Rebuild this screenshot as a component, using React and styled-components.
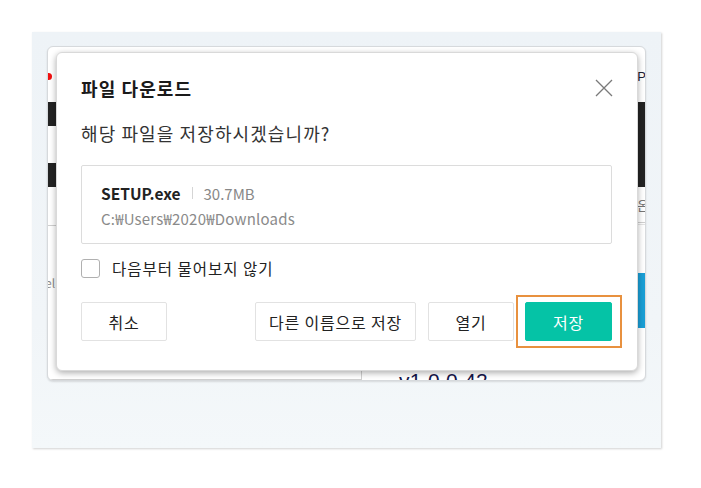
import React from "react";
import styled, { createGlobalStyle } from "styled-components";

const Global = createGlobalStyle`
  html, body { margin: 0; padding: 0; background: #ffffff; }
  body { font-family: "Noto Sans CJK KR", "Noto Sans", sans-serif; }
  * { box-sizing: border-box; }
`;

const Page = styled.div`
  padding: 32px 0 0 32px;
  width: 701px;
  height: 488px;
`;

const Backdrop = styled.div`
  width: 629px;
  height: 416px;
  padding: 14px 0 0 15px;
  background: linear-gradient(180deg, #eef3f7 0%, #f1f5f8 70%, #f4f8fa 100%);
  box-shadow: 1px 1px 2px rgba(0, 0, 0, 0.18);
`;

const AppWindow = styled.div`
  position: relative;
  width: 599px;
  height: 335px;
  background: #fff;
  border: 1px solid #d6d9dc;
  border-radius: 6px;
  box-shadow: 0 1px 2px rgba(0, 0, 0, 0.12);
  display: flex;
  flex-direction: column;
  overflow: hidden;
`;

const TopRow = styled.div`
  height: 55px;
  flex-shrink: 0;
  display: flex;
  align-items: center;
  justify-content: space-between;
  padding-top: 10px;
`;

const RedDot = styled.span`
  width: 7px;
  height: 7px;
  border-radius: 50%;
  background: #f01010;
  margin-left: -3px;
  margin-top: -7px;
`;

const TopLabel = styled.span`
  font-family: "Liberation Sans", sans-serif;
  font-size: 13px;
  color: #223;
  border-right: 2px solid #d00;
  margin-right: -3px;
  margin-top: -6px;
  line-height: 12px;
`;

const MidRow = styled.div`
  height: 85px;
  flex-shrink: 0;
  display: flex;
`;

const MidLeft = styled.div`
  flex: 1;
  display: flex;
  flex-direction: column;
  justify-content: space-between;
`;

const DarkBar = styled.div`
  height: ${(p) => p.$h}px;
  background: #232323;
`;

const MidRight = styled.div`
  width: 300px;
  background: #232323;
`;

const LowerArea = styled.div`
  flex: 1;
  display: grid;
  grid-template-columns: 313px 1fr;
`;

const LowerLeft = styled.div`
  display: flex;
  flex-direction: column;
`;

const LeftHead = styled.div`
  height: 39px;
  border-bottom: 1px solid #cfcfcf;
`;

const FaintText = styled.div`
  margin-top: 50px;
  font-size: 12px;
  color: #8a8a8a;
  line-height: 14px;
  margin-left: -3px;
`;

const LeftFoot = styled.div`
  margin-top: auto;
  height: 14px;
  border-top: 1px solid #cfcfcf;
`;

const LowerRight = styled.div`
  border-left: 1px solid #d0d0d0;
  display: flex;
  flex-direction: column;
  align-items: flex-end;
  overflow: hidden;
`;

const SmallKor = styled.div`
  margin-top: 11px;
  font-size: 13px;
  line-height: 14px;
  color: #777;
  margin-right: -4px;
`;

const DoubleLine = styled.div`
  align-self: stretch;
  margin-top: 10px;
  height: 3px;
  border-top: 1px solid #cfcfcf;
  border-bottom: 1px solid #e3e3e3;
`;

const BlueBar = styled.div`
  margin-top: 48px;
  width: 120px;
  height: 55px;
  background: #1a9fd6;
`;

const Version = styled.div`
  align-self: flex-start;
  margin-top: 41px;
  margin-left: 37px;
  font-family: "Liberation Sans", sans-serif;
  font-size: 21px;
  line-height: 24px;
  letter-spacing: 0.3px;
  color: #14144a;
  white-space: nowrap;
`;

const Dialog = styled.div`
  position: absolute;
  left: 8px;
  top: 5px;
  width: 582px;
  height: 319px;
  background: #fff;
  border: 1px solid #d9d9d9;
  border-radius: 6px;
  box-shadow: 0 2px 6px rgba(0, 0, 0, 0.32);
  padding: 23px 25px 0 24px;
  display: flex;
  flex-direction: column;
`;

const Header = styled.div`
  height: 24px;
  display: flex;
  align-items: center;
  justify-content: space-between;
`;

const Title = styled.h2`
  margin: 0;
  font-size: 18px;
  letter-spacing: 1.1px;
  font-weight: 700;
  color: #1a1a1a;
  line-height: 24px;
`;

const CloseButton = styled.button`
  border: 0;
  background: none;
  padding: 0;
  width: 18px;
  height: 18px;
  margin-right: -1px;
  display: flex;
  cursor: pointer;
`;

const Question = styled.p`
  margin: 21px 0 0;
  font-size: 18px;
  letter-spacing: 1.1px;
  line-height: 24px;
  color: #333;
`;

const FileBox = styled.div`
  margin-top: 20px;
  height: 79px;
  border: 1px solid #dcdcdc;
  border-radius: 2px;
  padding: 16px 20px 0 19px;
  display: flex;
  flex-direction: column;
  gap: 4px;
`;

const FileLine = styled.div`
  display: flex;
  align-items: center;
  height: 22px;
`;

const FileName = styled.span`
  font-size: 15.5px;
  font-weight: 700;
  color: #222;
`;

const Sep = styled.span`
  width: 1px;
  height: 12px;
  background: #d5d5d5;
  margin: 0 10px 0 12px;
`;

const FileSize = styled.span`
  font-size: 15px;
  color: #888;
`;

const FilePath = styled.div`
  height: 22px;
  line-height: 22px;
  font-size: 15px;
  letter-spacing: 0.2px;
  color: #8a8a8a;
`;

const CheckRow = styled.label`
  margin-top: 15px;
  height: 19px;
  display: flex;
  align-items: center;
  gap: 12px;
  cursor: pointer;
`;

const Box = styled.span`
  width: 19px;
  height: 19px;
  border: 1px solid #b0b0b0;
  border-radius: 3px;
  background: #fff;
`;

const CheckText = styled.span`
  font-size: 15.5px;
  letter-spacing: 1px;
  color: #222;
  line-height: 19px;
`;

const Buttons = styled.div`
  margin-top: 24px;
  display: flex;
  align-items: center;
  gap: 12px;
`;

const Spacer = styled.div`
  flex: 1;
`;

const Btn = styled.button`
  position: relative;
  width: ${(p) => p.$w}px;
  height: 39px;
  border: 1px solid ${(p) => (p.$primary ? "#05c3a6" : "#e2e2e2")};
  background: ${(p) => (p.$primary ? "#05c3a6" : "#fff")};
  color: ${(p) => (p.$primary ? "#fff" : "#222")};
  border-radius: 2px;
  font-family: "Noto Sans CJK KR", "Noto Sans", sans-serif;
  font-size: 16px;
  letter-spacing: 0.8px;
  padding: 0;
  cursor: pointer;
  ${(p) => p.$ml && `margin-left: ${p.$ml}px;`}
  ${(p) =>
    p.$highlight &&
    `&::after {
      content: "";
      position: absolute;
      left: -10px;
      right: -11px;
      top: -8px;
      bottom: -8px;
      border: 2px solid #e8913f;
      pointer-events: none;
    }`}
`;

export default function App() {
  return (
    <Page>
      <Global />
      <Backdrop>
        <AppWindow>
          <TopRow>
            <RedDot />
            <TopLabel>OP</TopLabel>
          </TopRow>
          <MidRow>
            <MidLeft>
              <DarkBar $h={24} />
              <DarkBar $h={24} />
            </MidLeft>
            <MidRight />
          </MidRow>
          <LowerArea>
            <LowerLeft>
              <LeftHead />
              <FaintText>el</FaintText>
              <LeftFoot />
            </LowerLeft>
            <LowerRight>
              <SmallKor>온</SmallKor>
              <DoubleLine />
              <BlueBar />
              <Version>v1.0.0.42</Version>
            </LowerRight>
          </LowerArea>

          <Dialog role="dialog" aria-label="파일 다운로드">
            <Header>
              <Title>파일 다운로드</Title>
              <CloseButton aria-label="닫기">
                <svg width="18" height="18" viewBox="0 0 18 18">
                  <path d="M1 1 L17 17 M17 1 L1 17" stroke="#7a7a7a" strokeWidth="1.3" fill="none" />
                </svg>
              </CloseButton>
            </Header>
            <Question>해당 파일을 저장하시겠습니까?</Question>
            <FileBox>
              <FileLine>
                <FileName>SETUP.exe</FileName>
                <Sep />
                <FileSize>30.7MB</FileSize>
              </FileLine>
              <FilePath>C:₩Users₩2020₩Downloads</FilePath>
            </FileBox>
            <CheckRow>
              <Box />
              <CheckText>다음부터 물어보지 않기</CheckText>
            </CheckRow>
            <Buttons>
              <Btn $w={86}>취소</Btn>
              <Spacer />
              <Btn $w={161}>다른 이름으로 저장</Btn>
              <Btn $w={86}>열기</Btn>
              <Btn $w={87} $primary $highlight $ml={-1}>저장</Btn>
            </Buttons>
          </Dialog>
        </AppWindow>
      </Backdrop>
    </Page>
  );
}
